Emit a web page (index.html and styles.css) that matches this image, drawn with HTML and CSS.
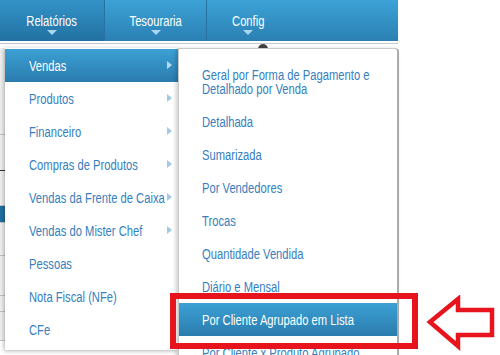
FILE: index.html
```html
<!DOCTYPE html>
<html lang="pt-BR">
<head>
    <meta charset="UTF-8">
    <meta name="viewport" content="width=device-width, initial-scale=1.0">
    <title>Relatórios</title>
    <link rel="stylesheet" href="styles.css">
</head>
<body>
    <header class="topbar">
        <div class="nav-item active first">
            <span class="label">Relatórios</span>
            <i class="caret"></i>
            <ul class="menu">
                <li class="menu-item sub current"><span class="label">Vendas</span>
                    <ul class="submenu">
                        <li class="sub-item"><span class="label">Geral por Forma de Pagamento e<br>Detalhado por Venda</span></li>
                        <li class="sub-item"><span class="label">Detalhada</span></li>
                        <li class="sub-item"><span class="label">Sumarizada</span></li>
                        <li class="sub-item"><span class="label">Por Vendedores</span></li>
                        <li class="sub-item"><span class="label">Trocas</span></li>
                        <li class="sub-item"><span class="label">Quantidade Vendida</span></li>
                        <li class="sub-item"><span class="label">Diário e Mensal</span></li>
                        <li class="sub-item current"><span class="label">Por Cliente Agrupado em Lista</span></li>
                        <li class="sub-item"><span class="label">Por Cliente x Produto Agrupado</span></li>
                    </ul>
                </li>
                <li class="menu-item sub"><span class="label">Produtos</span></li>
                <li class="menu-item sub"><span class="label">Financeiro</span></li>
                <li class="menu-item sub"><span class="label">Compras de Produtos</span></li>
                <li class="menu-item sub"><span class="label">Vendas da Frente de Caixa</span></li>
                <li class="menu-item sub"><span class="label">Vendas do Mister Chef</span></li>
                <li class="menu-item"><span class="label">Pessoas</span></li>
                <li class="menu-item"><span class="label">Nota Fiscal (NFe)</span></li>
                <li class="menu-item"><span class="label">CFe</span></li>
            </ul>
        </div>
        <div class="nav-item">
            <span class="label">Tesouraria</span>
            <i class="caret"></i>
        </div>
        <div class="nav-item last">
            <span class="label">Config</span>
            <i class="caret"></i>
        </div>
    </header>

    <main class="page">
        <div class="toolbar"><span class="globe"></span></div>
        <div class="rows">
            <div class="row" style="height: 86px"></div>
            <div class="row dark" style="height: 35px"></div>
            <div class="row" style="height: 34px"></div>
            <div class="row selected" style="height: 16px"></div>
            <div class="row" style="height: 32px"></div>
            <div class="row" style="height: 39px"></div>
            <div class="row" style="height: 15px"></div>
            <div class="row" style="height: 28px"></div>
        </div>
    </main>

    <div class="callout-box"></div>
    <svg class="callout-arrow" width="72" height="56" viewBox="0 0 72 56">
        <polygon points="4,27 32,4 32,15 66,15 66,40 32,40 32,51" fill="#fff" stroke="#e8141d" stroke-width="4.5" stroke-linejoin="miter"/>
    </svg>
</body>
</html>
```

FILE: styles.css
```css
body {
    margin: 0;
    width: 500px;
    height: 355px;
    overflow: hidden;
    position: relative;
    background: #fff;
    font-family: "Liberation Sans", Arial, sans-serif;
    font-size: 14px;
}
ul {
    list-style: none;
    margin: 0;
    padding: 0;
}
/* the original uses a narrow face, so the labels get squeezed */
.label {
    display: inline-block;
    white-space: nowrap;
    transform: scaleX(0.8);
    transform-origin: left center;
}
.topbar {
    width: 398px;
    height: 41px;
    display: flex;
    background: linear-gradient(#3ca2d6, #2b80b3);
}
.nav-item {
    width: 102px;
    box-sizing: border-box;
    padding-top: 13px;
    display: flex;
    flex-direction: column;
    align-items: center;
    color: #fff;
    line-height: 16px;
    border-right: 1px solid #2673a3;
}
.nav-item > .label {
    transform-origin: center;
}
.nav-item.first {
    width: 105px;
    position: relative;
}
.nav-item.last {
    width: 82px;
    border-right: none;
}
.nav-item.active {
    background: linear-gradient(#3393c8, #2271a2);
}
.caret {
    width: 0;
    height: 0;
    margin-top: 1px;
    border-left: 5px solid transparent;
    border-right: 5px solid transparent;
    border-top: 5px solid #a9d6f0;
}
.menu {
    position: absolute;
    top: 48px;
    left: 5px;
    width: 173px;
    padding: 1px 0 4px;
    background: #fff;
    box-shadow: -1px 1px 4px rgba(0, 0, 0, 0.3);
    z-index: 2;
}
.menu-item {
    height: 33px;
    display: flex;
    align-items: center;
    padding-left: 24px;
    color: #3580bd;
    position: relative;
}
.menu-item.sub::after {
    content: "";
    position: absolute;
    right: 6px;
    top: 12px;
    border-left: 5px solid #9fcbe8;
    border-top: 4px solid transparent;
    border-bottom: 4px solid transparent;
}
.menu-item.current {
    color: #fff;
    background: linear-gradient(#3ca0d4, #2a7cae);
}
.menu-item.current::after {
    border-left-color: #b6dcf2;
}
.submenu {
    position: absolute;
    left: 173px;
    top: -1px;
    width: 218px;
    height: 320px;
    padding-top: 9px;
    background: #fff;
    border: 1px solid #c9c9c9;
    border-right: 2px solid #ababab;
    border-top-right-radius: 4px;
    box-shadow: -2px 1px 4px rgba(0, 0, 0, 0.2);
    overflow: hidden;
}
.sub-item {
    padding: 10px 20px 9px 23px;
    line-height: 14px;
    color: #3580bd;
}
.sub-item.current {
    color: #fff;
    background: linear-gradient(#3ca0d4, #2a7cae);
}
.page {
    width: 398px;
}
.toolbar {
    height: 4px;
    margin-top: 2px;
    padding-left: 258px;
    border-top: 1px solid #c8c8c8;
    overflow: hidden;
}
.globe {
    display: block;
    width: 10px;
    height: 10px;
    border-radius: 50%;
    background: #444;
}
.rows {
    width: 60px;
    background: #efefef;
}
.row {
    border-bottom: 1px solid #c4c4c4;
}
.row.dark {
    border-bottom-color: #333;
}
.row.selected {
    background: #1f6fa0;
}
.callout-box {
    position: absolute;
    left: 170px;
    top: 293px;
    width: 248px;
    height: 56px;
    box-sizing: border-box;
    border: 6px solid #e8141d;
    z-index: 3;
}
.callout-arrow {
    position: absolute;
    left: 426px;
    top: 295px;
    z-index: 3;
}
```
